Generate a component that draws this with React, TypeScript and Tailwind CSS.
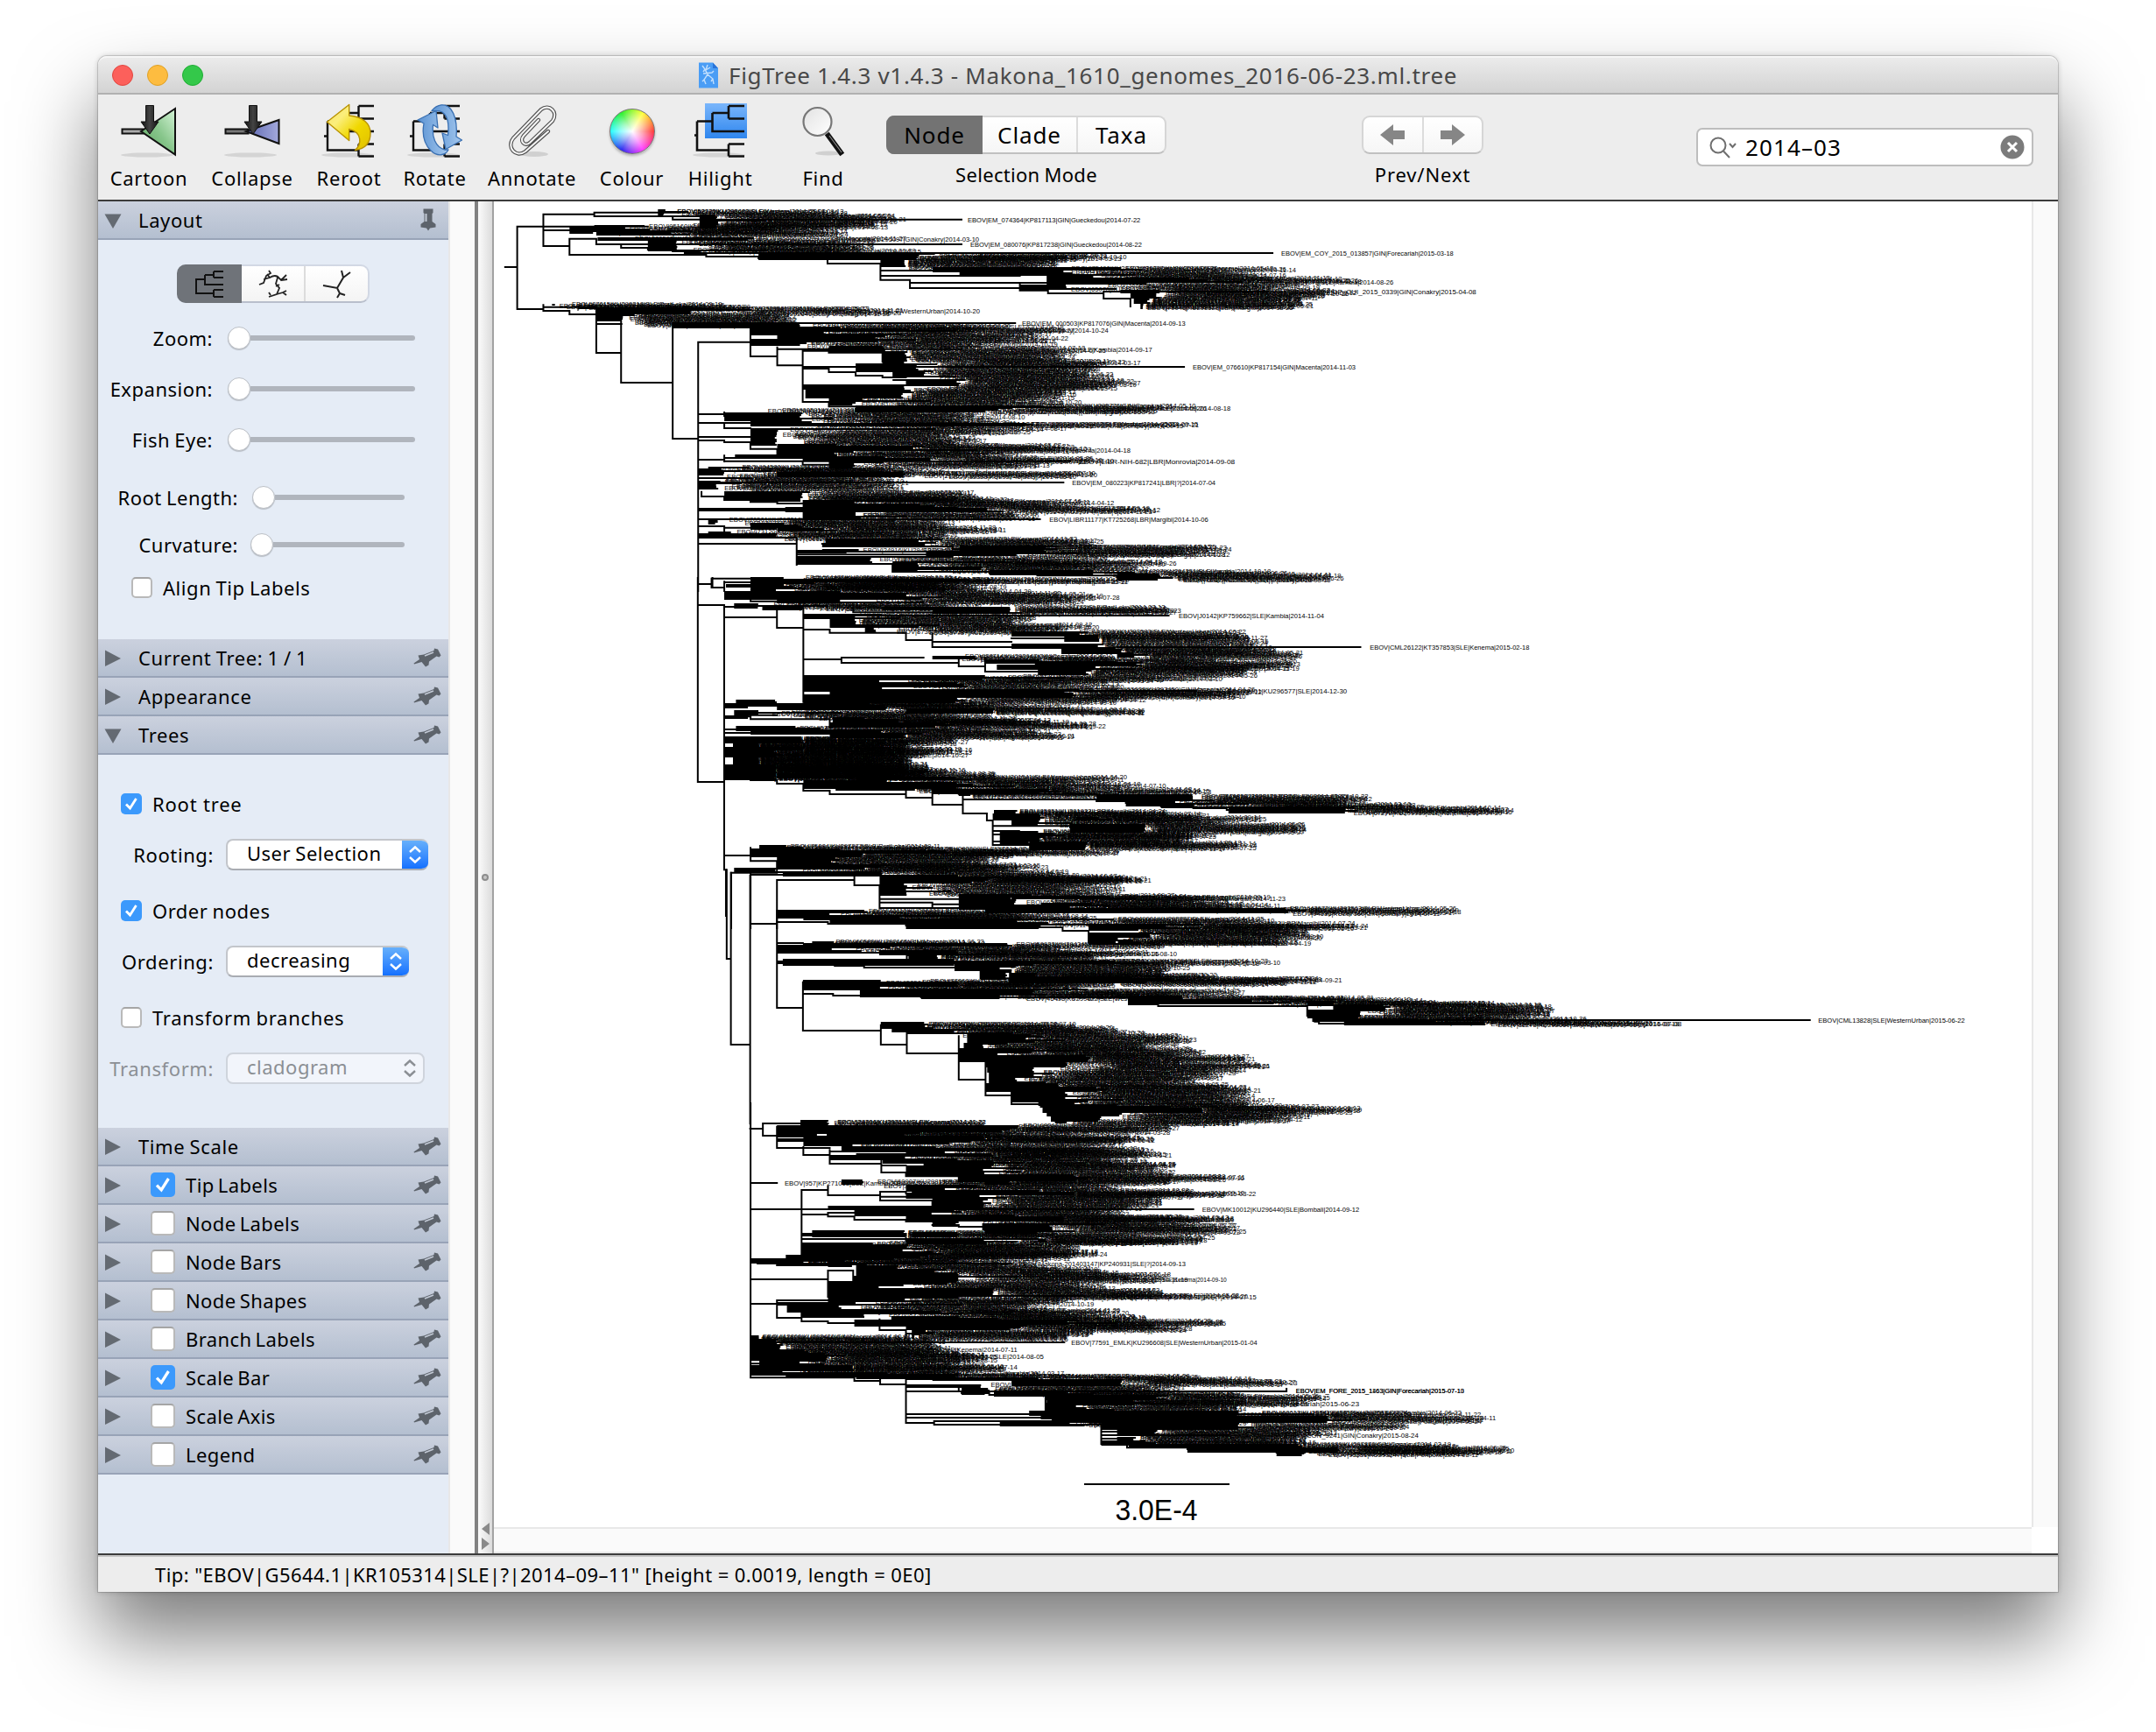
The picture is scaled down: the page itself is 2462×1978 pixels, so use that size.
import React from "react";

type Band = [number, number, number, number, number];
type Panel = { ox: number; oy: number; sx: number; path: string; bands: Band[]; tips: [number, number, number, string][] };

/* Each stretch of the phylogeny keeps its own local units: x * sx + ox, y / 3 + oy.
   Band = [top, bottom, node x, first tip x, right edge of the labels]. */
const panels: Panel[] = [
  {
    ox: 560, oy: 225, sx: 0.7653,
    path: "M22 240H40M40 101V384M40 101H235M79 59V168M79 59H155M155 53V66M155 53H280M155 66H312M272 66V77M272 77H703M79 114H118M79 168H118M118 143V198M118 143H158M158 143V162H195V174H235V180H272V186H312M195 162H703M118 198H322V204H400V210H503V228H582M290 192H1167M582 228V284M582 252H660M582 270H790M582 284H626V312H790M626 294H830M790 300V320H832V330H915V348H955V375M915 324H1160M40 384H79V370M79 377H158M79 390H118V402H158M158 384V534H195M195 420V636H272M272 436V828H310M310 497V1350M310 497H388M272 432H783M388 440V546H428M428 515V577H466M428 521H703M466 530V702H505M466 588H505V600H545V612H585V618H620M466 582H1035M466 527H505V533H585V565M505 702V718H545M545 725V735M310 744H349M349 738V750M310 774H349V792H388M349 774H388M310 822H388M310 834H349V840H388V863H428V880M310 900H349M349 886V906M349 894H466M349 905H865M466 905V917H505M310 978H855M315 1010V1026H349V1038H388V1045H428V1050H466M310 1068H740M310 1074H740M310 1128H349V1145M349 1133H388M310 1104H820M310 1188H457M457 1172V1260M495 1188H570V1198H690V1206H845M457 1212H530M457 1218H530M457 1225H728M600 1260V1284H745V1290H816V1297H935V1303H970V1310M310 1326H330M330 1307V1338H349M330 1307H388M349 1318V1350M349 1320H388M545 779H808M700 720H857M620 1314H703",
    bands: [
      [47, 62, 250, 262, 540], [62, 84, 312, 340, 620], [84, 103, 312, 340, 580], [96, 107, 155, 190, 540], [107, 128, 118, 158, 540], [118, 130, 158, 272, 540],
      [140, 150, 160, 180, 735], [150, 186, 235, 280, 580], [180, 188, 290, 300, 650], [195, 212, 400, 640, 955], [206, 218, 503, 620, 880], [218, 242, 582, 620, 840],
      [242, 258, 660, 860, 1210], [258, 270, 700, 870, 1190], [270, 284, 830, 900, 1270], [284, 300, 830, 980, 1350], [300, 318, 790, 860, 1240], [318, 332, 940, 1000, 1300],
      [332, 347, 955, 995, 1250], [347, 366, 960, 985, 1200], [366, 380, 970, 975, 1130], [366, 378, 92, 92, 385], [376, 386, 130, 135, 385], [380, 400, 158, 300, 735],
      [400, 438, 158, 198, 462], [436, 446, 272, 466, 780], [444, 470, 388, 466, 880], [452, 462, 430, 466, 928], [470, 492, 428, 500, 865], [490, 512, 388, 462, 855],
      [515, 530, 505, 590, 990], [530, 560, 585, 622, 860], [560, 575, 585, 622, 975], [575, 600, 545, 640, 915], [600, 626, 600, 650, 935], [626, 645, 620, 698, 975],
      [645, 660, 466, 620, 935], [660, 688, 470, 618, 880], [688, 714, 505, 545, 885], [714, 726, 545, 780, 1107], [726, 738, 545, 740, 1000], [730, 738, 402, 402, 700],
      [738, 768, 349, 466, 805], [768, 795, 388, 480, 905], [776, 785, 545, 800, 1063], [795, 815, 388, 430, 810], [815, 848, 388, 428, 745], [848, 862, 428, 520, 875],
      [860, 874, 428, 545, 960], [872, 884, 428, 470, 800], [882, 895, 365, 420, 815], [895, 908, 466, 660, 935], [908, 926, 505, 545, 838], [924, 938, 325, 330, 640],
      [934, 955, 310, 349, 700], [944, 958, 428, 620, 910], [955, 1002, 310, 340, 630], [1010, 1035, 349, 466, 730], [1028, 1044, 388, 466, 775], [1038, 1052, 466, 545, 930],
      [1050, 1065, 466, 545, 890], [1064, 1080, 440, 700, 1008], [1080, 1104, 466, 545, 822], [1104, 1118, 325, 340, 700], [1118, 1136, 388, 428, 700], [1132, 1146, 428, 466, 775],
      [1146, 1158, 325, 360, 700], [1156, 1172, 310, 430, 690], [1170, 1188, 500, 640, 920], [1188, 1200, 495, 650, 920], [1196, 1215, 700, 830, 1110], [1208, 1218, 495, 530, 900],
      [1215, 1230, 650, 790, 1112], [1233, 1260, 457, 570, 960], [1248, 1258, 600, 750, 1023], [1258, 1284, 600, 640, 990], [1282, 1295, 745, 900, 1205], [1294, 1314, 935, 1000, 1278],
      [1302, 1312, 388, 440, 750], [1308, 1320, 388, 700, 950], [1318, 1350, 388, 430, 775],
    ],
    tips: [
      [712, 970, 78, "EBOV|EM_074364|KP817113|GIN|Gueckedou|2014-07-22"], [716, 972, 162, "EBOV|EM_080076|KP817238|GIN|Gueckedou|2014-08-22"],
      [1180, 1437, 192, "EBOV|EM_COY_2015_013857|GIN|Forecariah|2015-03-18"], [1200, 1471, 324, "EBOV|COP|DP_GUI_2015_0339|GIN|Conakry|2015-04-08"],
      [793, 1037, 432, "EBOV|EM_000503|KP817076|GIN|Macenta|2014-09-13"], [1048, 1291, 582, "EBOV|EM_076610|KP817154|GIN|Macenta|2014-11-03"],
      [878, 1111, 906, "EBOV|LIBR-NIH-682|LBR|Monrovia|2014-09-08"], [868, 1082, 978, "EBOV|EM_080223|KP817241|LBR|?|2014-07-04"],
      [834, 1071, 1104, "EBOV|LIBR11177|KT725268|LBR|Margibi|2014-10-06"],
    ],
  },
  {
    ox: 760, oy: 660, sx: 0.6696,
    path: "M55 0V699H100M55 93H100M80 0V33H100M100 93V1000M103 1000V1158M100 99H145M100 135H190M190 100V171H235M235 105V425M235 177H280V188H410V213H455M455 190V237H590M455 219H590M770 237H1185M235 279H300M300 273V291H500M300 273H440M500 275V303H545M545 275V321H635M545 291H812M235 387H905M100 475H145V484H280V512M145 60V80H235M145 470H190M100 519H145M100 531H145M100 688H145V693H190V705H235V729H280V741H410V753H455V777H507M410 720V753M455 720V777M507 742V807H548M500 740H735M507 759H735V765H785V771H845V783H900V789H957V795H1145V803M548 807V831H558V915M558 850H690V856H780M558 867H603V880M558 879H603M558 903H603M558 915H620M100 951H145M145 925V970H190V1005M112 1010V1200M112 1010H190M145 1015V1200M145 1017H285M190 1035V1200M190 1035H322M322 1020V1053H365V1131M365 1100H500M365 1112H455M365 1131H545M455 1118V1131M455 1118H500M630 1140H1080M145 1185H190M190 1179H277V1185H410V1191H635M235 129H858M320 105V118H455M590 207H720",
    bands: [
      [0, 24, 145, 190, 590], [24, 45, 103, 190, 540], [46, 60, 100, 300, 720], [58, 72, 100, 410, 780], [72, 86, 190, 300, 720], [86, 100, 117, 160, 490], [96, 108, 165, 235, 560],
      [100, 112, 370, 590, 860], [110, 122, 455, 590, 880], [124, 142, 235, 325, 636], [142, 160, 280, 325, 600], [160, 172, 280, 420, 745], [172, 186, 340, 360, 690],
      [184, 202, 590, 700, 995], [200, 222, 680, 740, 995], [229, 244, 590, 740, 1040], [244, 258, 675, 780, 1040], [256, 274, 770, 800, 1085], [268, 280, 455, 500, 770],
      [276, 288, 545, 640, 960], [286, 300, 630, 770, 1092], [300, 312, 565, 725, 1087], [306, 334, 635, 722, 1000], [336, 350, 235, 545, 955], [342, 358, 240, 325, 835],
      [356, 384, 235, 370, 790], [382, 396, 280, 680, 1020], [394, 410, 410, 700, 985], [404, 428, 235, 500, 830], [420, 440, 120, 190, 620], [434, 444, 100, 145, 600],
      [440, 456, 190, 380, 735], [450, 466, 410, 560, 800], [456, 472, 117, 160, 560], [470, 482, 100, 145, 560], [480, 498, 285, 340, 600], [486, 500, 285, 400, 660],
      [498, 514, 280, 455, 750], [512, 524, 120, 190, 560], [520, 536, 145, 370, 640], [534, 548, 280, 410, 692], [548, 568, 100, 235, 460], [568, 586, 115, 160, 380],
      [584, 600, 100, 235, 420], [596, 612, 100, 190, 440], [612, 656, 115, 160, 385], [548, 686, 130, 150, 375], [640, 690, 100, 190, 410], [654, 672, 150, 190, 520], [670, 688, 190, 300, 570],
      [682, 694, 325, 500, 788], [694, 706, 235, 380, 700], [704, 718, 235, 500, 860], [718, 730, 290, 420, 700], [724, 740, 455, 640, 930], [738, 748, 500, 520, 740],
      [746, 766, 735, 900, 1210], [764, 780, 785, 870, 1170], [774, 790, 845, 1000, 1300], [786, 806, 960, 1160, 1452], [798, 812, 560, 600, 850], [808, 832, 558, 640, 925],
      [820, 830, 700, 740, 1025], [832, 848, 590, 640, 960], [844, 872, 690, 820, 1100], [868, 900, 570, 640, 900], [880, 888, 600, 650, 942], [898, 914, 570, 620, 880],
      [906, 928, 620, 720, 970], [918, 930, 160, 170, 500], [928, 946, 145, 300, 690], [934, 946, 190, 480, 780], [944, 956, 145, 325, 600], [954, 984, 190, 280, 558],
      [982, 1000, 190, 340, 610], [984, 992, 300, 370, 652], [996, 1008, 117, 190, 600], [1006, 1024, 200, 370, 705], [1020, 1045, 365, 500, 800], [1026, 1040, 365, 545, 835],
      [1045, 1086, 365, 412, 790], [1086, 1106, 500, 590, 960], [1092, 1100, 590, 760, 1068], [1106, 1136, 500, 600, 990], [1116, 1124, 640, 720, 1055], [1132, 1150, 545, 1040, 1365],
      [1132, 1140, 545, 700, 1160], [1140, 1168, 190, 280, 660], [1156, 1170, 235, 400, 742], [1168, 1182, 280, 600, 1040], [1182, 1200, 410, 640, 1205],
    ],
    tips: [
      [875, 1123, 130, "EBOV|J0142|KP759662|SLE|Kambia|2014-11-04"], [1201, 1473, 237, "EBOV|CML26122|KT357853|SLE|Kenema|2015-02-18"],
      [910, 1162, 387, "EBOV|M01|KU296577|SLE|2014-12-30"], [300, 517, 562, "EBOV|G4725.1|KR105282|2014-07-27"], [290, 505, 586, "EBOV|LIBR|Lofa|?|2014-09-19"], [300, 517, 608, "EBOV|20141064|SLE|2014-10-27"],
    ],
  },
  {
    ox: 760, oy: 960, sx: 0.9566,
    path: "M73 100V405M73 405H78M78 110V699H101M101 120V970M133 240V573M101 285H133M133 573H164M164 485V651H257M133 351H164M257 385H288V408M288 393H320M202 418V429H237V435H345M376 440V472H410V478M164 525H200V531H305V537H553V561H588V567H766M588 555H745M766 567V600M806 615H1366M766 600H775V620H780V627H975M257 632V699H288M288 655V729H350M350 670V819H382M382 750V873H413M413 850V903H445M101 987H116M444 290V297H474V309H505V350",
    bands: [
      [290, 302, 505, 600, 842], [300, 320, 505, 560, 770], [316, 334, 505, 580, 790], [334, 355, 505, 540, 740], [346, 354, 540, 570, 760], [345, 358, 175, 200, 380],
      [354, 364, 164, 410, 600], [360, 384, 133, 200, 490], [378, 392, 255, 350, 610], [384, 408, 290, 325, 515], [410, 424, 140, 345, 640], [412, 421, 133, 500, 737],
      [424, 444, 345, 400, 630], [444, 472, 376, 408, 600], [458, 474, 410, 445, 665], [470, 484, 410, 560, 807], [478, 492, 500, 540, 745], [480, 514, 164, 257, 500],
      [486, 498, 200, 350, 540], [512, 526, 232, 440, 697], [518, 536, 232, 350, 620], [530, 542, 305, 400, 750], [536, 548, 553, 620, 850], [544, 558, 553, 700, 925],
      [554, 566, 766, 800, 1000], [562, 584, 797, 860, 1066], [582, 606, 766, 830, 1062], [604, 618, 772, 806, 1000], [610, 622, 776, 900, 1110], [620, 632, 810, 980, 1213],
      [626, 640, 257, 310, 475], [638, 656, 270, 320, 545], [652, 668, 288, 345, 580], [666, 696, 360, 410, 637], [694, 716, 356, 380, 580], [712, 730, 350, 440, 648],
      [728, 742, 350, 400, 620], [738, 756, 350, 505, 706], [754, 764, 410, 430, 620], [762, 778, 382, 480, 728], [776, 796, 384, 440, 700], [794, 814, 386, 440, 672],
      [812, 836, 386, 420, 640], [834, 850, 382, 470, 670], [844, 864, 382, 510, 706], [862, 882, 413, 480, 706], [880, 896, 413, 470, 732], [894, 910, 445, 490, 700],
      [906, 922, 447, 540, 790], [916, 930, 450, 640, 836], [928, 946, 455, 545, 778], [944, 962, 460, 520, 760], [960, 972, 465, 480, 690],
    ],
    tips: [
      [1376, 1551, 615, "EBOV|CML13828|SLE|WesternUrban|2015-06-22"], [985, 1213, 628, "EBOV|20141582|KU296440|SLE|WesternUrban|2015-07-08"],
      [425, 727, 273, "EBOV|MK10173|KU296821|SLE|Kono|2015-02-10"],
    ],
  },
  {
    ox: 760, oy: 1260, sx: 0.6696,
    path: "M145 0V940M145 87H166M166 69V111H190M166 69H277M190 80V153H280M190 123H235M190 129H235M235 150V177H280M280 160V207H368M368 195V237H410M280 165H410M368 213H410M410 237V250H500M500 250V267H545M500 255H725M145 273H190M232 297V540M232 297H277M277 285V315H366M366 303V333H455M366 303H410M366 320H410M410 309H680M455 333V350M145 363H900M232 381H277V388H322V399H410V405H455M277 375H322M455 417H500V423H545V437M232 447H410M232 453H410M232 465H635M410 460V472M232 483H277M145 540H232M145 543H232M157 540V549H190V555H277M190 549H590M145 603H277M277 573V663M277 573H320V610M277 615H320M145 687H190M190 675V735H232V747H277V753H322M190 675H320M232 700V735M232 711H320M232 729H277M322 753H768M365 740V777H410V805M410 789H455M145 819H680M145 880H230M145 892H190M145 915H320M145 926H190M145 940H322V951H366V963H410M366 935V963M410 945V1095H458M410 945H455M410 970H500M410 987H1059V978M500 970V987M505 993H552V999H648M648 999V1060M648 1029H888M410 1065H1105M410 1077H660M660 1083H1130M458 1089V1101H743M458 1089H680M743 1101V1167M743 1125H835M743 1137H960M743 1149H790M743 1167H787V1180H890V1185H947V1191H1042V1197H1090",
    bands: [
      [62, 76, 230, 280, 548], [76, 92, 190, 590, 885], [86, 108, 275, 410, 865], [94, 118, 190, 260, 620], [112, 138, 235, 500, 800], [116, 128, 235, 545, 836], [138, 150, 235, 320, 790],
      [150, 166, 300, 440, 780], [154, 164, 410, 545, 832], [164, 182, 410, 480, 830], [172, 182, 325, 560, 869], [180, 192, 280, 410, 760], [190, 210, 370, 500, 830],
      [206, 222, 440, 560, 878], [218, 250, 410, 545, 878], [248, 262, 500, 700, 965], [258, 278, 545, 590, 870], [266, 284, 300, 340, 760], [284, 298, 410, 480, 785],
      [298, 314, 420, 640, 900], [306, 316, 455, 700, 960], [314, 326, 410, 540, 890], [324, 352, 455, 545, 857], [352, 366, 277, 520, 812], [364, 386, 322, 455, 790],
      [386, 406, 410, 600, 930], [390, 402, 455, 680, 972], [404, 420, 455, 500, 900], [416, 434, 540, 660, 985], [430, 444, 545, 635, 995], [440, 460, 250, 410, 640],
      [444, 458, 420, 500, 900], [458, 478, 635, 650, 923], [468, 482, 410, 545, 880], [478, 492, 232, 300, 690], [486, 528, 232, 410, 720], [508, 520, 300, 460, 760],
      [524, 540, 205, 300, 690], [534, 545, 145, 240, 500], [544, 560, 277, 320, 640], [558, 574, 325, 400, 740], [572, 586, 325, 460, 780], [584, 600, 325, 500, 868],
      [596, 612, 320, 500, 900], [610, 626, 277, 410, 740], [624, 640, 277, 365, 770], [638, 656, 277, 560, 857], [654, 668, 277, 500, 900], [658, 666, 500, 720, 1012],
      [668, 684, 277, 410, 700], [680, 696, 190, 325, 735], [694, 716, 207, 300, 690], [708, 724, 235, 470, 797], [722, 736, 232, 340, 800], [730, 744, 385, 500, 832],
      [744, 758, 322, 690, 960], [754, 766, 322, 545, 840], [764, 780, 410, 590, 908], [778, 792, 420, 440, 735], [790, 808, 420, 425, 690], [798, 812, 145, 160, 412],
      [810, 828, 145, 190, 460], [828, 850, 145, 200, 480], [846, 866, 145, 230, 520], [860, 880, 145, 277, 560], [878, 906, 160, 230, 555], [900, 916, 145, 320, 540],
      [914, 928, 145, 200, 520], [924, 940, 205, 340, 700], [932, 942, 325, 500, 908], [940, 952, 455, 640, 1010], [950, 964, 590, 780, 1083], [964, 980, 410, 540, 890],
      [978, 996, 505, 550, 880], [990, 1006, 560, 690, 990], [1002, 1016, 648, 840, 1135], [1014, 1030, 670, 700, 1000], [1022, 1034, 650, 800, 1100], [1034, 1060, 648, 700, 995],
      [1058, 1072, 620, 980, 1400], [1066, 1080, 640, 720, 1200], [1076, 1090, 680, 1130, 1400], [1088, 1102, 570, 690, 1000], [1100, 1116, 743, 980, 1278], [1114, 1136, 770, 835, 1145],
      [1134, 1166, 770, 800, 1100], [1160, 1170, 743, 820, 1100], [1168, 1184, 790, 1080, 1360], [1180, 1194, 890, 1150, 1452], [1190, 1204, 1042, 1090, 1400],
    ],
    tips: [
      [203, 442, 273, "EBOV|957|KP271018|SLE|Kambia|2014-08-30"], [915, 1183, 363, "EBOV|MK10012|KU296440|SLE|Bombali|2014-09-12"],
      [602, 887, 549, "EBOV|Makona-201403147|KP240931|SLE|?|2014-09-13"], [692, 1009, 820, "EBOV|77591_EMLK|KU296608|SLE|WesternUrban|2015-01-04"],
      [1075, 1362, 984, "EBOV|EM_FORE_2015_1163|GIN|Forecariah|2015-07-10"], [1075, 1362, 986, "EBOV|EM_FORE_2015_1463|GIN|Forecariah|2015-07-13"],
      [820, 1007, 309, "EBOV|SLE|WesternRural|2015-03-22"], [400, 600, 843, "EBOV|G5002|SLE|Kenema|2014-07-11"], [430, 645, 867, "EBOV|KM034|SLE|2014-08-05"], [400, 600, 903, "EBOV|Makona|SLE|2014-07-14"],
      [780, 957, 603, "EBOV|201212|SLE|Kenema|2014-09-10"], [900, 1183, 1029, "EBOV|COY_2015_760|GIN|Forecariah|2015-06-23"], [1000, 1284, 1137, "EBOV|CON_9241|GIN|Conakry|2015-08-24"],
    ],
  },
];

const places = ["SLE|WesternUrban", "GIN|Macenta", "SLE|Kenema", "LBR|Margibi", "GIN|Conakry", "SLE|PortLoko", "SLE|?", "SLE|Kambia"];

function makeRandom(seed: number) {
  let s = seed;
  return () => {
    s = (s * 1664525 + 1013904223) % 4294967296;
    return s / 4294967296;
  };
}

function buildPanel(p: Panel, index: number) {
  const rnd = makeRandom(77 + index * 31);
  const labels: { x: number; y: number; t: string }[] = [];
  let lines = "";
  for (const [y0, y1, node, tip, right] of p.bands) {
    const top = p.oy + y0 / 3;
    const bottom = p.oy + y1 / 3;
    const nodeX = p.ox + node * p.sx;
    const tipX = p.ox + tip * p.sx;
    const rightX = p.ox + right * p.sx;
    const middle = (top + bottom) / 2;
    let reached = false;
    for (let y = top; y <= bottom; y += 0.9) {
      const place = places[Math.floor(rnd() * places.length)];
      const month = 3 + Math.floor(rnd() * 9);
      const t = `EBOV|${10000 + Math.floor(rnd() * 89999)}|KU29${1000 + Math.floor(rnd() * 8999)}|${place}|2014-${month < 10 ? "0" : ""}${month}-${10 + Math.floor(rnd() * 19)}`;
      const w = t.length * 4.12;
      const last = Math.max(tipX + 2, rightX - w);
      let x = tipX + 4 + (last - tipX - 4) * Math.pow(rnd(), 0.9) * 0.95;
      if (!reached && y >= middle) {
        x = last;
        reached = true;
      }
      labels.push({ x, y: y + 2.8, t });
      const ly = Math.round(y / 2) * 2 + 0.0;
      if (node < tip && rnd() < 0.8) lines += `M${nodeX.toFixed(1)} ${ly}H${(tipX - rnd() * 4).toFixed(1)}`;
      if (rnd() < 0.24) lines += `M${nodeX.toFixed(1)} ${ly}H${(x - 5).toFixed(1)}`;
    }
  }
  return { labels, lines };
}

const built = panels.map(buildPanel);

function Tip({ p, tip }: { p: Panel; tip: [number, number, number, string] }) {
  const [x0, x1, y, t] = tip;
  const width = (x1 - x0) * p.sx;
  const perChar = width / t.length;
  const base = p.oy + y / 3 + 2.8;
  if (perChar > 4.6) {
    return <text x={p.ox + x1 * p.sx} y={base} textAnchor="end">{t}</text>;
  }
  return <text x={p.ox + x0 * p.sx} y={base} textLength={width} lengthAdjust="spacingAndGlyphs">{t}</text>;
}

function Tree() {
  return (
    <svg viewBox="564 230 1756 1514" className="block h-[1514px] w-[1756px] overflow-hidden bg-white" fontFamily="'Liberation Sans', Arial, sans-serif">
      {panels.map((p, i) => (
        <g key={i}>
          <g fontSize="7.6" fill="#000">
            {built[i].labels.map((l, k) => (
              <text key={k} x={l.x.toFixed(1)} y={l.y.toFixed(1)}>{l.t}</text>
            ))}
          </g>
          <path d={built[i].lines} stroke="#000" strokeWidth="2" fill="none" />
          <g transform={`translate(${p.ox} ${p.oy}) scale(${p.sx} 0.33333)`}>
            <path d={p.path} stroke="#000" strokeWidth="2" fill="none" vectorEffect="non-scaling-stroke" strokeLinecap="square" />
          </g>
          <g fontSize="7.8" fill="#000">
            {p.tips.map((tip, k) => <Tip key={k} p={p} tip={tip} />)}
          </g>
        </g>
      ))}
      <path d="M1188 1260L1205 1282L1212 1282L1200 1260Z" fill="#000" />
      <path d="M1238 1695H1404" stroke="#000" strokeWidth="2" />
      <text x="1273.500" y="1736" fontSize="33" textLength="94" lengthAdjust="spacingAndGlyphs">3.0E-4</text>
    </svg>
  );
}

/* ---------- toolbar icons ---------- */

const Svg = ({ children }: { children: React.ReactNode }) => (
  <svg viewBox="0 0 64 64" className="h-16 w-16 shrink-0 overflow-visible" fill="none">{children}</svg>
);

const Shade = () => <ellipse cx="30" cy="61" rx="30" ry="2.6" fill="#000" opacity="0.1" />;

const BlackArrow = () => (
  <path d="M28.500 4.500H37.500V23H43L33 37L23 23H28.500Z" fill="url(#ink)" stroke="#111" strokeWidth="1" />
);

const CartoonIcon = () => (
  <Svg>
    <defs>
      <linearGradient id="ink" x1="0" x2="1"><stop offset="0" stopColor="#111" /><stop offset=".5" stopColor="#444" /><stop offset="1" stopColor="#111" /></linearGradient>
      <linearGradient id="green" x1="0" y1="1" x2="1" y2="0"><stop offset="0" stopColor="#5aa05c" /><stop offset=".5" stopColor="#86c58a" /><stop offset="1" stopColor="#d6f5d8" /></linearGradient>
    </defs>
    <Shade />
    <rect x="1.500" y="31.500" width="24" height="5" fill="#aaa" stroke="#111" strokeWidth="2" />
    <path d="M23 34L62 8V60.500Z" fill="url(#green)" stroke="#111" strokeWidth="2" />
    <BlackArrow />
  </Svg>
);

const CollapseIcon = () => (
  <Svg>
    <defs>
      <linearGradient id="violet" x1="0" x2="1"><stop offset="0" stopColor="#5c66b0" /><stop offset="1" stopColor="#a3a9dc" /></linearGradient>
    </defs>
    <Shade />
    <rect x="1.500" y="31.500" width="26" height="5" fill="#777" stroke="#111" strokeWidth="2" />
    <path d="M25 34L62.500 21V48Z" fill="url(#violet)" stroke="#111" strokeWidth="2" />
    <BlackArrow />
  </Svg>
);

const TreeLines = () => (
  <path d="M3 39.500H7M7 22.500V55.500H42.500M42.500 48.500V62.500M42.500 48.500H60M42.500 62.500H60M7 22.500H26M26 13V34H60M26 13H42.500M42.500 5V19.500M42.500 5H60M42.500 19.500H60" stroke="#111" strokeWidth="2.400" />
);

const RerootIcon = () => (
  <Svg>
    <defs>
      <linearGradient id="gold" x1="0" y1="0" x2="1" y2="1"><stop offset="0" stopColor="#f7e36a" /><stop offset=".3" stopColor="#fbee7c" /><stop offset=".6" stopColor="#f0d800" /><stop offset="1" stopColor="#e0c000" /></linearGradient>
    </defs>
    <Shade />
    <TreeLines />
    <path d="M6.500 23.300L31.700 3.500V16C47 17 56 25 56 36C56 47 50 54 38.500 55.500C46 49 47 35 31.700 31.500V44.500Z" fill="url(#gold)" stroke="#b99300" strokeWidth="1.400" strokeLinejoin="round" />
  </Svg>
);

const RotateIcon = () => (
  <Svg>
    <defs>
      <linearGradient id="steel" x1="0" x2="1"><stop offset="0" stopColor="#5b93d3" /><stop offset="1" stopColor="#a5c8ee" /></linearGradient>
    </defs>
    <Shade />
    <TreeLines />
    <path d="M12 21L33 10.500L35 30L29.500 26.500C28 40 32 52 43 55L47 55C44 62 34 63 27 56C18 47 17 36 19 25Z" fill="url(#steel)" stroke="#3a70b2" strokeWidth="1.300" strokeLinejoin="round" />
    <path d="M28 10.500C34 3 44 1 50 9C56 17 57 28 56 40L62.500 44L44 54.500L40 36L46.500 38.500C48 26 46 16 40 12C36 10 33 11 28 10.500Z" fill="url(#steel)" stroke="#3a70b2" strokeWidth="1.300" strokeLinejoin="round" />
  </Svg>
);

const clip = "M39 21L22 39C17 45 23 52 29 47L55 22C62 12 51 2 42 9L10 42C2 52 13 65 24 57L50 34";
const AnnotateIcon = () => (
  <Svg>
    <ellipse cx="34" cy="60" rx="16" ry="3" fill="#000" opacity="0.12" />
    <path d={clip} stroke="#505050" strokeWidth="4.400" strokeLinecap="round" />
    <path d={clip} stroke="#f4f4f4" strokeWidth="2.100" strokeLinecap="round" />
  </Svg>
);

const ColourIcon = () => (
  <div className="flex h-16 w-16 shrink-0 items-center justify-center pt-1">
    <div className="h-[52px] w-[52px] rounded-full border border-[#777] bg-[radial-gradient(circle,#fff_0%,rgba(255,255,255,.55)_35%,rgba(255,255,255,0)_72%),conic-gradient(from_90deg,#f33,#f3f,#22e,#2ff,#2e2,#ff3,#f33)] shadow-[0_2px_3px_rgba(0,0,0,.25)]" />
  </div>
);

const HilightIcon = () => (
  <Svg>
    <defs>
      <linearGradient id="hi" x1="0" y1="0" x2="0" y2="1"><stop offset="0" stopColor="#7ab6fb" /><stop offset="1" stopColor="#2f86ee" /></linearGradient>
    </defs>
    <Shade />
    <rect x="14" y="2" width="48" height="40" fill="url(#hi)" />
    <path d="M2 38.500H5M5 22.500V55.500H41M41 48.500V62.500M41 48.500H59M41 62.500H59M5 22.500H22.500M22.500 13V34H59M22.500 13H41M41 5V19.500M41 5H59M41 19.500H59" stroke="#111" strokeWidth="2.600" />
  </Svg>
);

const FindIcon = () => (
  <Svg>
    <defs>
      <linearGradient id="lens" x1="0" y1="0" x2="1" y2="1"><stop offset="0" stopColor="#e2e2e2" /><stop offset="1" stopColor="#fff" /></linearGradient>
    </defs>
    <ellipse cx="38" cy="59" rx="15" ry="2.500" fill="#000" opacity="0.12" />
    <path d="M38 39L52 58" stroke="#111" strokeWidth="6" strokeLinecap="square" />
    <path d="M39 39L53 58" stroke="#888" strokeWidth="1.200" />
    <circle cx="25.500" cy="23" r="16" fill="url(#lens)" stroke="#777" strokeWidth="2.200" />
  </Svg>
);

const tools: [string, string, string, React.FC][] = [
  ["Cartoon", "w-[86px]", "mr-[29px]", CartoonIcon],
  ["Collapse", "w-[92px]", "mr-[29px]", CollapseIcon],
  ["Reroot", "w-[71px]", "mr-[29px]", RerootIcon],
  ["Rotate", "w-[67px]", "mr-[29px]", RotateIcon],
  ["Annotate", "w-[97px]", "mr-[29px]", AnnotateIcon],
  ["Colour", "w-[73px]", "mr-[30px]", ColourIcon],
  ["Hilight", "w-[69px]", "mr-[61px]", HilightIcon],
  ["Find", "w-[44px]", "mr-[50px]", FindIcon],
];

function Toolbar() {
  return (
    <div className="flex h-[122px] shrink-0 border-b-2 border-[#3c3c3c] bg-[#ededed] pl-[15px]">
      {tools.map(([name, w, m, Icon]) => (
        <div key={name} className={`flex shrink-0 flex-col items-center pt-2 ${w} ${m}`}>
          <Icon />
          <span className="mt-[7px] text-[22px] leading-8 tracking-[0.75px] whitespace-nowrap">{name}</span>
        </div>
      ))}
      <div className="flex w-[320px] shrink-0 flex-col items-center pt-6">
        <div className="flex h-[44px] w-full rounded-[9px] border-2 border-[#d6d6d6] border-b-[#c0c0c0] bg-gradient-to-b from-white to-[#f6f6f6] text-[26px] tracking-[0.9px]">
          <div className="-m-[2px] flex w-[110px] items-center justify-center rounded-l-[9px] bg-[#737373]">Node</div>
          <div className="ml-[2px] flex w-[109px] items-center justify-center border-r-2 border-[#dcdcdc]">Clade</div>
          <div className="flex flex-1 items-center justify-center">Taxa</div>
        </div>
        <span className="mt-[7px] text-[22px] leading-8 tracking-[0.3px] [word-spacing:-1px]">Selection Mode</span>
      </div>
      <div className="ml-[223px] flex w-[139px] shrink-0 flex-col items-center pt-6">
        <div className="flex h-[44px] w-full rounded-[9px] border-2 border-[#d6d6d6] border-b-[#c0c0c0] bg-gradient-to-b from-white to-[#f6f6f6]">
          <div className="flex flex-1 items-center justify-center border-r-2 border-[#dcdcdc]">
            <svg viewBox="0 0 30 26" className="h-[26px] w-[30px]"><path d="M1 13L16 1V8H29V18H16V25Z" fill="#868686" /></svg>
          </div>
          <div className="flex flex-1 items-center justify-center">
            <svg viewBox="0 0 30 26" className="h-[26px] w-[30px]"><path d="M29 13L14 1V8H1V18H14V25Z" fill="#868686" /></svg>
          </div>
        </div>
        <span className="mt-[7px] text-[22px] leading-8 tracking-[0.9px]">Prev/Next</span>
      </div>
      <div className="mt-[38px] ml-[243px] flex h-[44px] w-[385px] items-center rounded-[7px] border-2 border-[#bdbdbd] bg-white pr-2 pl-3">
        <svg viewBox="0 0 36 28" className="h-7 w-9" fill="none" stroke="#6e6e6e" strokeWidth="2">
          <circle cx="11" cy="12" r="8.500" /><path d="M17 18.500L24 26M24 10L27.500 14L31 10" />
        </svg>
        <span className="ml-1.5 flex-1 text-[26px] leading-8 tracking-[1.100px]">2014–03</span>
        <svg viewBox="0 0 28 28" className="h-7 w-7"><circle cx="14" cy="14" r="13.500" fill="#7b7b7b" /><path d="M9 9L19 19M19 9L9 19" stroke="#fff" strokeWidth="3" /></svg>
      </div>
    </div>
  );
}

/* ---------- sidebar ---------- */

const Pin = () => (
  <svg viewBox="0 0 32 22" className="h-[22px] w-8">
    <path d="M0.500 17.500L7 13L5.500 8.500L12 7.500L23.500 3L24 0.500L28 1.500L31.500 8.500L29.500 10.500L26.500 9.500L18 15.500L17.500 19.500L14 21.500L9.500 16L1 18.500Z" fill="#5d636b" />
    <path d="M13 9L23 5" stroke="#c3cad6" strokeWidth="1.600" />
  </svg>
);

const PinUp = () => (
  <svg viewBox="0 0 18 26" className="mr-1.5 h-[26px] w-[18px]">
    <path d="M3.500 0.500H14.500V5L13.500 6V15L17.500 18V21.500L11 22.500L9 25.500L7 22.500L0.500 21.500V18L4.500 15V6L3.500 5Z" fill="#5d636b" />
    <path d="M6.500 6V15" stroke="#c3cad6" strokeWidth="2" />
  </svg>
);

function Header({ title, open, up, check }: { title: string; open?: boolean; up?: boolean; check?: boolean }) {
  return (
    <div className="flex h-[44px] shrink-0 items-center border-b-2 border-[#98a3b7] bg-gradient-to-b from-[#cbd1de] to-[#b4bfd0] pr-2 pl-[7px]">
      <svg viewBox="0 0 20 20" className="h-5 w-5" fill="#646a72">
        {open ? <path d="M0.500 3.500H19.500L10 20Z" /> : <path d="M1 1.500L19 11L1 20Z" />}
      </svg>
      {check === undefined ? (
        <span className="ml-[19px] flex-1 text-[22px] leading-8 tracking-[0.6px] [word-spacing:-1px]">{title}</span>
      ) : (
        <>
          <span className="mr-3 ml-[33px]"><Check on={check} big /></span>
          <span className="flex-1 text-[22px] leading-8 tracking-[0.4px] [word-spacing:-2px]">{title}</span>
        </>
      )}
      {up ? <PinUp /> : <Pin />}
    </div>
  );
}

function Check({ on, big }: { on?: boolean; big?: boolean }) {
  return (
    <span className={`flex items-center justify-center rounded-[5px] ${big ? "h-7 w-7" : "h-6 w-6"} ${on ? "bg-[#3b99fc]" : "border-2 border-[#b9b9b9] border-t-[#a5a5a5] bg-white"}`}>
      {on && (
        <svg viewBox="0 0 24 24" className={big ? "h-7 w-7" : "h-6 w-6"} fill="none" stroke="#fff" strokeWidth="2.800">
          <path d="M6 12.500L10.500 17L17.500 6" />
        </svg>
      )}
    </span>
  );
}

function Slider({ label, labelW, knobGap, trackW, height }: { label: string; labelW: string; knobGap: string; trackW: string; height: string }) {
  return (
    <div className={`flex items-center ${height}`}>
      <span className={`text-right text-[22px] leading-8 tracking-[0.5px] whitespace-nowrap [word-spacing:-1px] ${labelW}`}>{label}</span>
      <div className={`flex items-center ${knobGap} ${trackW}`}>
        <span className="h-[26px] w-[26px] shrink-0 rounded-full border-[1.5px] border-[#bcc0c6] bg-white shadow-[0_1px_1px_rgba(0,0,0,.2)]" />
        <span className="h-1.5 flex-1 rounded-r-full bg-[#b0b5bd]" />
      </div>
    </div>
  );
}

function Select({ label, value, width, off }: { label: string; value: string; width: string; off?: boolean }) {
  return (
    <div className={`flex h-[36px] items-center ${off ? "text-[#8b8f94]" : ""}`}>
      <span className="w-[132px] text-right text-[22px] leading-8 tracking-[0.6px]">{label}</span>
      <div className={`ml-[14px] flex h-[36px] items-center overflow-hidden rounded-[8px] ${width} ${off ? "border-2 border-[#cfd4dc] bg-[#f2f5fb]" : "border-2 border-r-0 border-[#c3c6cb] border-b-[#a9acb2] bg-white"}`}>
        <span className="flex-1 pb-[4px] pl-[22px] text-[22px] leading-7 tracking-[0.5px] [word-spacing:-1px]">{value}</span>
        <span className={`flex h-[36px] w-[30px] items-center justify-center ${off ? "" : "bg-gradient-to-b from-[#6bb3fa] to-[#0a6bff]"}`}>
          <svg viewBox="0 0 16 22" className="h-[22px] w-4" fill="none" stroke={off ? "#8b8f94" : "#fff"} strokeWidth="2.400">
            <path d="M2 8L8 2.500L14 8M2 14L8 19.500L14 14" />
          </svg>
        </span>
      </div>
    </div>
  );
}

const rows: [string, boolean][] = [
  ["Tip Labels", true], ["Node Labels", false], ["Node Bars", false], ["Node Shapes", false],
  ["Branch Labels", false], ["Scale Bar", true], ["Scale Axis", false], ["Legend", false],
];

function Sidebar() {
  return (
    <div className="flex w-[400px] shrink-0 flex-col bg-[#e5ecf6]">
      <Header title="Layout" open up />
      <div className="flex h-[456px] shrink-0 flex-col pt-7">
        <div className="ml-[90px] flex h-[44px] w-[220px] rounded-[10px] border-2 border-[#d2d8e4] border-b-[#b9bfcc] bg-gradient-to-b from-white to-[#f4f4f4]">
          <div className="-m-[2px] flex w-[74px] items-center justify-center rounded-l-[10px] bg-[#6f7379]">
            <svg viewBox="0 0 34 34" className="h-[34px] w-[34px]" fill="none" stroke="#111" strokeWidth="2"><path d="M2 17V28H22M2 17V12H12M12 7V18H33M12 7H22M22 3V10M22 3H33M22 10H33M22 24V32M22 24H33M22 32H33" /></svg>
          </div>
          <div className="ml-[2px] flex w-[73px] items-center justify-center border-r-2 border-[#dcdcdc]">
            <svg viewBox="0 0 34 34" className="h-[34px] w-[34px]" fill="none" stroke="#222" strokeWidth="1.800"><path d="M1 18L6 16L9 8L14 5L12 2M6 12L13 10L10 6M13 10C18 7 22 8 24 11L26 13L32 7M26 13L33 12M22 10L20 17L24 22L21 29L12 32M14 30L12 27M21 29L28 27L32 25M28 27L32 30M24 18L20 20" /></svg>
          </div>
          <div className="flex flex-1 items-center justify-center">
            <svg viewBox="0 0 34 34" className="h-[34px] w-[34px]" fill="none" stroke="#222" strokeWidth="2"><path d="M1 19L17 22L24 10L22 2M24 10L32 4M17 22L20 28L17 33M20 28L26 30" /></svg>
          </div>
        </div>
        <div className="mt-[11px] flex flex-col">
          <Slider label="Zoom:" labelW="w-[131px]" knobGap="ml-[17px]" trackW="w-[214px]" height="h-[58px]" />
          <Slider label="Expansion:" labelW="w-[131px]" knobGap="ml-[17px]" trackW="w-[214px]" height="h-[58px]" />
          <Slider label="Fish Eye:" labelW="w-[131px]" knobGap="ml-[17px]" trackW="w-[214px]" height="h-[58px]" />
          <Slider label="Root Length:" labelW="w-[160px]" knobGap="ml-[16px]" trackW="w-[174px]" height="mt-[10px] h-[54px]" />
          <Slider label="Curvature:" labelW="w-[160px]" knobGap="ml-[14px]" trackW="w-[176px]" height="h-[54px]" />
          <div className="mt-[6px] ml-[38px] flex h-[32px] items-center gap-3">
            <Check />
            <span className="text-[22px] leading-8 tracking-[0.55px] [word-spacing:-1px]">Align Tip Labels</span>
          </div>
        </div>
      </div>
      <Header title="Current Tree: 1 / 1" />
      <Header title="Appearance" />
      <Header title="Trees" open />
      <div className="flex h-[426px] shrink-0 flex-col pt-[40px]">
        <div className="ml-[26px] flex h-8 items-center gap-3"><Check on /><span className="text-[22px] leading-8 tracking-[0.8px]">Root tree</span></div>
        <div className="mt-6"><Select label="Rooting:" value="User Selection" width="w-[231px]" /></div>
        <div className="mt-[30px] ml-[26px] flex h-8 items-center gap-3"><Check on /><span className="text-[22px] leading-8 tracking-[0.5px] [word-spacing:-1px]">Order nodes</span></div>
        <div className="mt-6"><Select label="Ordering:" value="decreasing" width="w-[209px]" /></div>
        <div className="mt-[30px] ml-[26px] flex h-8 items-center gap-3"><Check /><span className="text-[22px] leading-8 tracking-[0.7px] [word-spacing:-1px]">Transform branches</span></div>
        <div className="mt-6"><Select label="Transform:" value="cladogram" width="w-[227px]" off /></div>
      </div>
      <Header title="Time Scale" />
      {rows.map(([t, on]) => <Header key={t} title={t} check={on} />)}
    </div>
  );
}

export default function App() {
  return (
    <div className="h-[1978px] w-[2462px] overflow-hidden bg-white pt-16 pl-[112px] font-['Noto_Sans','Open_Sans',sans-serif] text-black">
      <div className="flex h-[1754px] w-[2238px] flex-col rounded-t-[10px] shadow-[0_50px_90px_rgba(0,0,0,.52),0_0_0_1px_rgba(0,0,0,.14),0_0_6px_rgba(0,0,0,.2)]">
        <div className="flex h-[44px] shrink-0 items-center rounded-t-[10px] border-t-2 border-b-2 border-t-[#f6f6f6] border-b-[#b1b1b1] bg-gradient-to-b from-[#ebebeb] to-[#d3d3d3] pl-4">
          <div className="flex gap-4">
            <span className="h-6 w-6 rounded-full border border-[#e2463f] bg-[#fc605b]" />
            <span className="h-6 w-6 rounded-full border border-[#dfa023] bg-[#fdbc40]" />
            <span className="h-6 w-6 rounded-full border border-[#1fae34] bg-[#34c84a]" />
          </div>
          <svg viewBox="0 0 24 30" className="ml-[565px] h-[30px] w-6">
            <path d="M1 0.500H17L23 7V29.500H1Z" fill="#4a9df5" />
            <path d="M17 0.500L23 7H17Z" fill="#2a74d8" />
            <path d="M5 4L8 8L6 11M11 3L9 9L14 6M8 8L11 14L7 20L9 25M11 14L17 19L18 25M6 13L16 12L18 10M7 20L5 22M17 19L15 22" stroke="#c2dffd" strokeWidth="1.400" fill="none" />
          </svg>
          <span className="ml-[11px] text-[26px] leading-9 tracking-[0.68px] whitespace-nowrap text-[#484848]">FigTree 1.4.3 v1.4.3 - Makona_1610_genomes_2016-06-23.ml.tree</span>
        </div>
        <Toolbar />
        <div className="flex h-[1544px] shrink-0">
          <Sidebar />
          <div className="w-[30px] shrink-0 border-l-2 border-[#e8e8e8] bg-[#fafafa]" />
          <div className="flex w-[22px] shrink-0 flex-col items-center border-r-2 border-l-4 border-r-[#a2a2a2] border-l-[#828282] bg-gradient-to-r from-[#fbfbfb] to-[#dcdcdc]">
            <span className="mt-[768px] h-2 w-2 rounded-full border-2 border-[#8d8d8d] bg-[#c5c5c5]" />
            <svg viewBox="0 0 10 34" className="mt-auto mb-[2px] h-[34px] w-[10px]" fill="#8a8a8a"><path d="M10 1V15L1 8ZM1 18V32L10 25Z" /></svg>
          </div>
          <div className="flex flex-1 flex-col bg-white">
            <div className="flex">
              <Tree />
              <div className="h-[1514px] w-[30px] border-l-2 border-[#e8e8e8] bg-[#fafafa]" />
            </div>
            <div className="h-[30px] w-[1756px] border-t-2 border-b-2 border-[#e8e8e8] bg-[#fafafa]" />
          </div>
        </div>
        <div className="flex h-[44px] shrink-0 items-center border-t-2 border-[#3c3c3c] bg-[#ededed] pt-[2px] pl-[65px] shadow-[inset_0_2px_0_#c4c4c4]">
          <span className="text-[22px] leading-8 tracking-[0.43px] whitespace-nowrap">Tip: &quot;EBOV|G5644.1|KR105314|SLE|?|2014–09–11&quot; [height = 0.0019, length = 0E0]</span>
        </div>
      </div>
    </div>
  );
}
